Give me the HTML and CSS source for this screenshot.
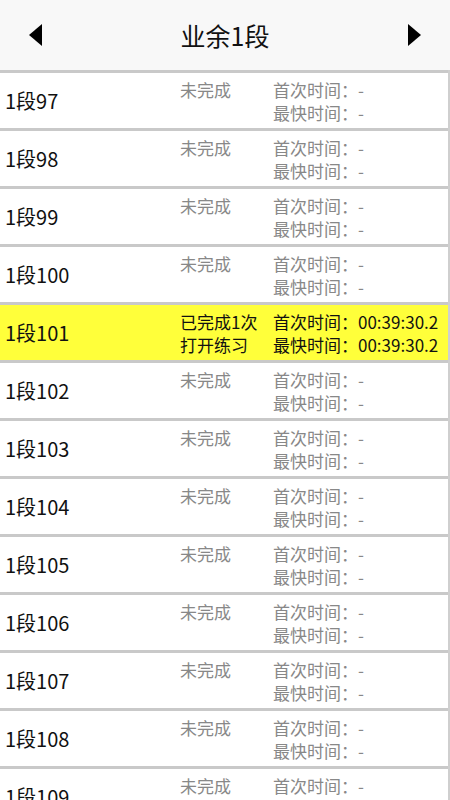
FILE: index.html
```html
<!DOCTYPE html>
<html>
    <head>
        <title>业余1段</title>
        <meta name='viewport' content='width=device-width, initial-scale=1.0'>
        <link rel="stylesheet" href="styles.css">
    </head>
    <body>
        <header class="bar">
            <span class="arrow left"></span>
            <h1>业余1段</h1>
            <span class="arrow right"></span>
        </header>
        <ul class="levels">
            <li class="level">
                <span class="name">1段97</span>
                <span class="status">未完成</span>
                <span class="times">首次时间：-<br>最快时间：-</span>
            </li>
            <li class="level">
                <span class="name">1段98</span>
                <span class="status">未完成</span>
                <span class="times">首次时间：-<br>最快时间：-</span>
            </li>
            <li class="level">
                <span class="name">1段99</span>
                <span class="status">未完成</span>
                <span class="times">首次时间：-<br>最快时间：-</span>
            </li>
            <li class="level">
                <span class="name">1段100</span>
                <span class="status">未完成</span>
                <span class="times">首次时间：-<br>最快时间：-</span>
            </li>
            <li class="level current">
                <span class="name">1段101</span>
                <span class="status">已完成1次<br>打开练习</span>
                <span class="times">首次时间：00:39:30.2<br>最快时间：00:39:30.2</span>
            </li>
            <li class="level">
                <span class="name">1段102</span>
                <span class="status">未完成</span>
                <span class="times">首次时间：-<br>最快时间：-</span>
            </li>
            <li class="level">
                <span class="name">1段103</span>
                <span class="status">未完成</span>
                <span class="times">首次时间：-<br>最快时间：-</span>
            </li>
            <li class="level">
                <span class="name">1段104</span>
                <span class="status">未完成</span>
                <span class="times">首次时间：-<br>最快时间：-</span>
            </li>
            <li class="level">
                <span class="name">1段105</span>
                <span class="status">未完成</span>
                <span class="times">首次时间：-<br>最快时间：-</span>
            </li>
            <li class="level">
                <span class="name">1段106</span>
                <span class="status">未完成</span>
                <span class="times">首次时间：-<br>最快时间：-</span>
            </li>
            <li class="level">
                <span class="name">1段107</span>
                <span class="status">未完成</span>
                <span class="times">首次时间：-<br>最快时间：-</span>
            </li>
            <li class="level">
                <span class="name">1段108</span>
                <span class="status">未完成</span>
                <span class="times">首次时间：-<br>最快时间：-</span>
            </li>
            <li class="level">
                <span class="name">1段109</span>
                <span class="status">未完成</span>
                <span class="times">首次时间：-<br>最快时间：-</span>
            </li>
        </ul>
    </body>
</html>
```

FILE: styles.css
```css
* {
    margin: 0px;
    padding: 0px;
}
body {
    width: 450px;
    height: 800px;
    overflow: hidden;
    font-family: "Noto Sans CJK SC", "Noto Sans", sans-serif;
    background: #fff;
    color: #111;
}
.bar {
    height: 70px;
    background: #f8f8f8;
    display: flex;
    align-items: center;
    justify-content: space-between;
    padding: 0 29px 0 29px;
}
.bar h1 {
    font-size: 25px;
    font-weight: normal;
    color: #111;
}
.arrow {
    width: 0;
    height: 0;
    border-top: 11px solid transparent;
    border-bottom: 11px solid transparent;
}
.arrow.left {
    border-right: 13px solid #000;
}
.arrow.right {
    border-left: 13px solid #000;
}
.levels {
    list-style: none;
    border-right: 2px solid #cfcfcf;
}
.level {
    height: 55px;
    border-top: 3px solid #c9c9c9;
    display: grid;
    grid-template-columns: 175px 93px 1fr;
    padding-left: 5px;
    font-size: 17px;
    line-height: 23px;
    color: #888;
}
.level .name {
    align-self: center;
    font-size: 20px;
    color: #111;
}
.level .status,
.level .times {
    padding-top: 5px;
    white-space: nowrap;
}
.current {
    background: #ffff3a;
    color: #111;
}
```
